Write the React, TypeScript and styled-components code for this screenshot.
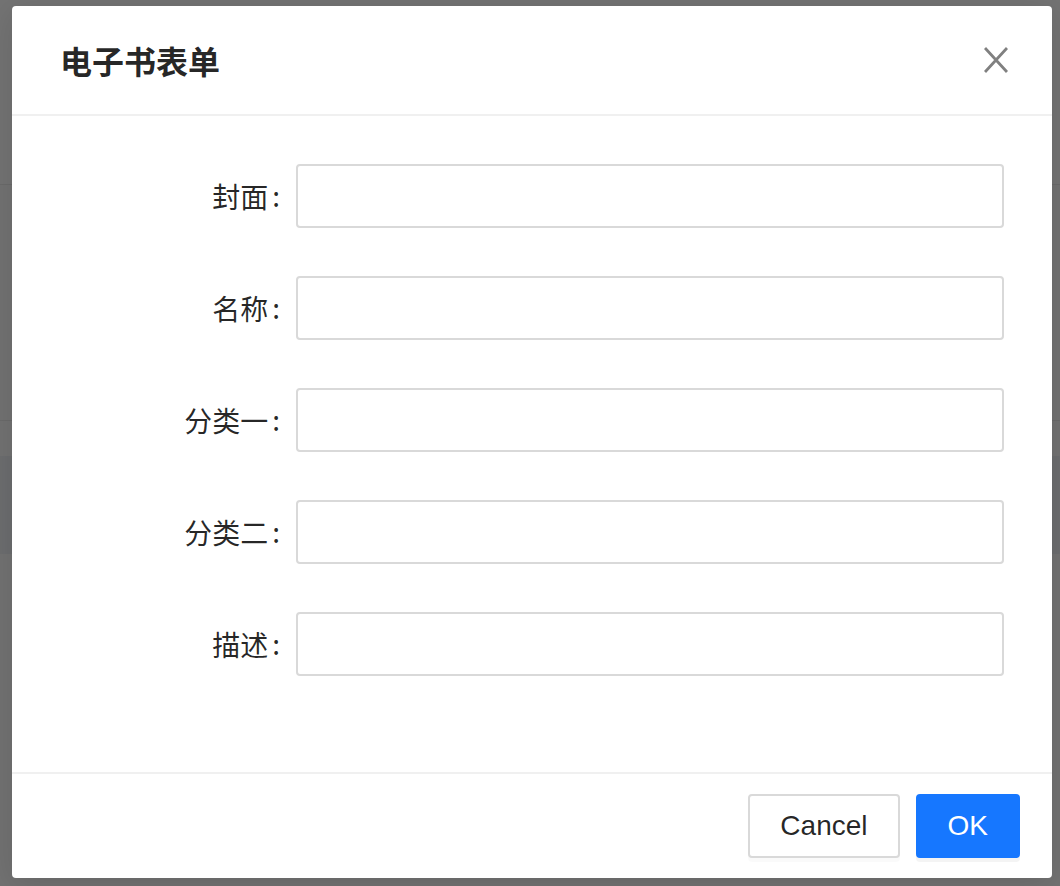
import React from "react";
import styled, { createGlobalStyle } from "styled-components";

const GlobalStyle = createGlobalStyle`
  html, body { margin: 0; padding: 0; }
  body {
    font-family: "Liberation Sans", "Noto Sans CJK SC", sans-serif;
    -webkit-font-smoothing: antialiased;
  }
  * { box-sizing: border-box; }
`;

const Page = styled.div`
  position: relative;
  width: 1060px;
  height: 886px;
  overflow: hidden;
  background: #727272;
  display: flex;
  flex-direction: column;
`;

const Band = styled.div<{ $h: number; $bg: string; $line?: boolean }>`
  height: ${(p) => p.$h}px;
  flex: none;
  background: ${(p) => p.$bg};
  border-bottom: ${(p) => (p.$line ? "1px solid #6a6a6a" : "none")};
`;

const Modal = styled.div`
  position: absolute;
  left: 12px;
  top: 6px;
  width: 1040px;
  background: #fff;
  border-radius: 4px;
  box-shadow: 0 6px 32px rgba(0, 0, 0, 0.12);
  display: flex;
  flex-direction: column;
`;

const Header = styled.div`
  display: flex;
  align-items: center;
  justify-content: space-between;
  height: 110px;
  padding-left: 48px;
  border-bottom: 2px solid #f0f0f0;
`;

const Title = styled.div`
  font-family: "Noto Sans CJK SC", sans-serif;
  font-size: 32px;
  line-height: 44px;
  font-weight: 600;
  color: rgba(0, 0, 0, 0.85);
`;

const CloseButton = styled.button`
  width: 112px;
  height: 108px;
  border: none;
  background: transparent;
  padding: 0;
  display: flex;
  align-items: center;
  justify-content: center;
  cursor: pointer;
`;

const Body = styled.div`
  padding: 48px;
  display: flex;
  flex-direction: column;
`;

const FormItem = styled.div`
  display: grid;
  grid-template-columns: 25% 75%;
  align-items: center;
  height: 64px;
  margin-bottom: 48px;
`;

const Label = styled.label`
  font-family: "Noto Sans CJK SC", sans-serif;
  font-size: 28px;
  line-height: 64px;
  color: rgba(0, 0, 0, 0.85);
  text-align: right;
  white-space: nowrap;
  &::after {
    content: ":";
    position: relative;
    top: -1px;
    margin: 0 16px 0 4px;
  }
`;

const Input = styled.input`
  width: 100%;
  height: 64px;
  border: 2px solid #d9d9d9;
  border-radius: 4px;
  padding: 8px 22px;
  font-size: 28px;
  color: rgba(0, 0, 0, 0.85);
  outline: none;
  background: #fff;
`;

const Footer = styled.div`
  display: flex;
  justify-content: flex-end;
  gap: 16px;
  padding: 20px 32px;
  border-top: 2px solid #f0f0f0;
`;

const Button = styled.button<{ $primary?: boolean }>`
  height: 64px;
  padding: 0 30px;
  font-family: "Liberation Sans", sans-serif;
  font-size: 28px;
  line-height: 60px;
  border-radius: 4px;
  border: 2px solid ${(p) => (p.$primary ? "#1677ff" : "#d9d9d9")};
  background: ${(p) => (p.$primary ? "#1677ff" : "#fff")};
  color: ${(p) => (p.$primary ? "#fff" : "rgba(0,0,0,0.85)")};
  box-shadow: 0 4px 0 rgba(0, 0, 0, ${(p) => (p.$primary ? 0.045 : 0.02)});
  cursor: pointer;
`;

const fields = ["封面", "名称", "分类一", "分类二", "描述"];

export default function App() {
  return (
    <>
      <GlobalStyle />
      <Page>
        <Band $h={185} $bg="#737373" $line />
        <Band $h={236} $bg="#727272" $line />
        <Band $h={35} $bg="#727272" />
        <Band $h={98} $bg="#6c6d6f" />
        <Band $h={332} $bg="#727272" />
        <Modal>
          <Header>
            <Title>电子书表单</Title>
            <CloseButton aria-label="Close">
              <svg width="24" height="26" viewBox="0 0 24 26">
                <path
                  d="M1 1 L23 25 M23 1 L1 25"
                  stroke="#808080"
                  strokeWidth="2.8"
                  fill="none"
                />
              </svg>
            </CloseButton>
          </Header>
          <Body>
            {fields.map((f) => (
              <FormItem key={f}>
                <Label>{f}</Label>
                <Input />
              </FormItem>
            ))}
          </Body>
          <Footer>
            <Button>Cancel</Button>
            <Button $primary>OK</Button>
          </Footer>
        </Modal>
      </Page>
    </>
  );
}
